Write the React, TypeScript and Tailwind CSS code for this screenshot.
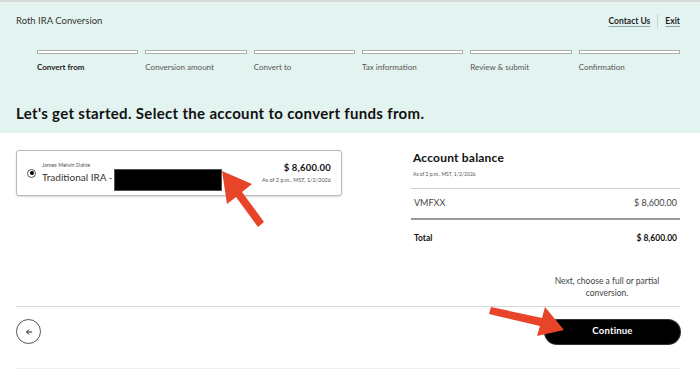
import React from "react";

const steps = ["Convert from", "Conversion amount", "Convert to", "Tax information", "Review & submit", "Confirmation"];

export default function App() {
  return (
    <div className="relative w-[700px] h-[374px] bg-white overflow-hidden text-[#1f1f1f]" style={{ fontFamily: "Lato, 'Noto Sans', sans-serif" }}>
      <div className="h-[2px] bg-[#d4d8d7]" />
      <div className="bg-[#e3f3f0] h-[131px] pl-4 pr-5">
        <div className="flex items-center justify-between h-[36px] pt-[2px]">
          <div className="text-[9.5px] text-[#333]">Roth IRA Conversion</div>
          <div className="flex items-center text-[8.5px] font-bold">
            <span className="underline decoration-[#8aa] underline-offset-2">Contact Us</span>
            <span className="mx-[7px] w-px h-[14px] bg-[#c8d4d2]" />
            <span className="underline decoration-[#8aa] underline-offset-2">Exit</span>
          </div>
        </div>
        <div className="pl-[21px] mt-[12px]">
          <div className="grid grid-cols-6 gap-[7px]">
            {steps.map((s) => (
              <div key={s} className="h-[4px] bg-white border border-[#a9b0af]" />
            ))}
          </div>
          <div className="grid grid-cols-6 gap-[7px] mt-[7px]">
            {steps.map((s, i) => (
              <div key={s} className={i === 0 ? "text-[8px] font-bold text-[#222]" : "text-[8px] text-[#555]"}>{s}</div>
            ))}
          </div>
        </div>
        <div className="mt-[29px] text-[15px] font-bold text-[#111] tracking-[0.32px]">Let's get started. Select the account to convert funds from.</div>
      </div>

      <div className="flex pl-4 pr-5 pt-[17px]">
        <div className="w-[326px]">
          <div className="h-[46px] rounded-[3px] border border-[#b9b9b9] shadow-[0_1px_2px_rgba(0,0,0,0.15)] flex items-center pl-[10px] pr-[10px]">
            <div className="w-[9px] h-[9px] rounded-full border border-[#555] flex items-center justify-center">
              <div className="w-[4px] h-[4px] rounded-full bg-black" />
            </div>
            <div className="ml-[6px] flex-1">
              <div className="text-[5.5px] text-[#555] leading-[7px]">James Melvin Dahle</div>
              <div className="flex items-center text-[10px] text-[#333] leading-[12px]">
                Traditional IRA -
                <span className="ml-[2px] w-[108px] h-[22px] bg-black border border-[#555] -mb-[6px]" />
              </div>
            </div>
            <div className="text-right">
              <div className="text-[9.5px] font-bold text-[#111] leading-[12px] tracking-[0.2px]">$ 8,600.00</div>
              <div className="text-[5.5px] text-[#555] mt-[2px]">As of 2 p.m., MST, 1/2/2026</div>
            </div>
          </div>
        </div>
        <div className="ml-[69px] flex-1">
          <div className="pl-[2px] text-[12px] font-bold text-[#111] leading-[14px] mt-[1px] tracking-[0.2px]">Account balance</div>
          <div className="pl-[2px] text-[5px] text-[#555] mt-[6px]">As of 2 p.m., MST, 1/2/2026</div>
          <div className="mt-[9px] border-t border-[#cfcfcf]" />
          <div className="flex justify-between items-center h-[29px] px-[3px] text-[9px] text-[#444]">
            <span>VMFXX</span>
            <span>$ 8,600.00</span>
          </div>
          <div className="border-t-2 border-[#9a9a9a]" />
          <div className="flex justify-between items-center h-[38px] px-[3px] text-[8.5px] font-bold text-[#111]">
            <span>Total</span>
            <span>$ 8,600.00</span>
          </div>
          <div className="mt-[17px] flex justify-end pr-[8px]">
            <div className="w-[130px] text-center text-[8.5px] text-[#444] leading-[12px]">Next, choose a full or partial conversion.</div>
          </div>
        </div>
      </div>

      <div className="absolute left-4 right-5 top-[306px] border-t border-[#d6d6d6]" />
      <div className="absolute left-4 right-5 top-[319px] flex justify-between items-center">
        <div className="w-[25px] h-[25px] rounded-full border border-[#555] flex items-center justify-center">
          <svg width="8" height="8" viewBox="0 0 8 8" fill="none" stroke="#222" strokeWidth="1">
            <path d="M7 4H1.5M4 1.5L1.5 4L4 6.5" />
          </svg>
        </div>
        <div className="w-[135px] h-[24px] rounded-full bg-black text-white text-[9.5px] font-bold flex items-center justify-center shadow-[0_0_0_1px_#333] tracking-[0.2px]">Continue</div>
      </div>
      <div className="absolute left-4 right-5 top-[368px] border-t border-[#f0f0f0]" />

      <svg className="absolute left-0 top-0 pointer-events-none" width="700" height="374" viewBox="0 0 700 374">
        <g fill="#e8442a">
          <polygon points="222,171 252,184 242,192 264,222 258,227 236,197 227,204" />
          <polygon points="564,330 537,336 540,326 489,314 491,307 542,318 545,307" />
        </g>
      </svg>
    </div>
  );
}
